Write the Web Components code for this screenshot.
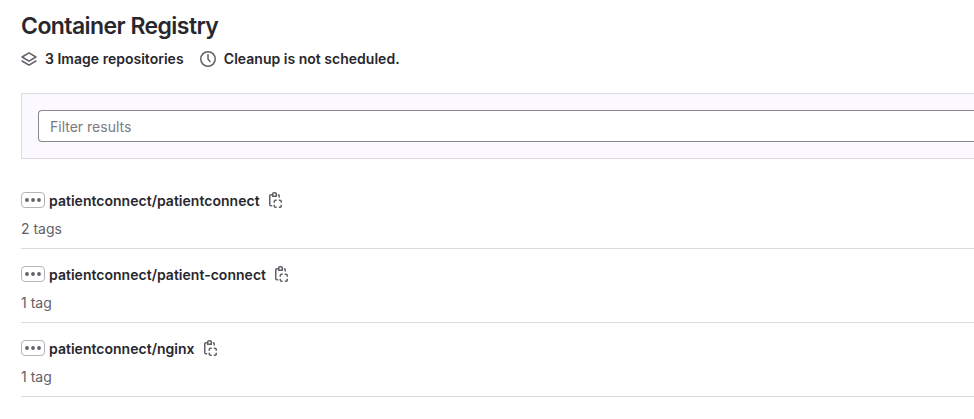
<!DOCTYPE html>
<html lang="en">
<head>
<meta charset="utf-8">
<title>Container Registry</title>
<style>
html,body{margin:0;background:#fff;overflow:hidden}
body{font:400 14px/20px Inter,"Liberation Sans",sans-serif;color:#28272d;height:419px}
</style>
</head>
<body>
<registry-page>
  <registry-header slot="header" heading="Container Registry">
    <meta-item icon="layers">3 Image repositories</meta-item>
    <meta-item icon="clock">Cleanup is not scheduled.</meta-item>
  </registry-header>
  <filter-bar slot="filter">Filter results</filter-bar>
  <repo-row><span>patientconnect/patientconnect</span><span slot="tags">2 tags</span></repo-row>
  <repo-row><span>patientconnect/patient-connect</span><span slot="tags">1 tag</span></repo-row>
  <repo-row><span>patientconnect/nginx</span><span slot="tags">1 tag</span></repo-row>
</registry-page>
<script>
const icons = {
  layers: '<path d="M8 1.9 14.9 6 8 10.1 1.1 6Z M1.1 10 8 14.1 14.9 10" fill="none" stroke="currentColor" stroke-width="1.5" stroke-linejoin="round" stroke-linecap="round"/>',
  clock: '<circle cx="8" cy="8" r="7.25" fill="none" stroke="currentColor" stroke-width="1.5"/><path d="M8 3.8V8l2 2.6" fill="none" stroke="currentColor" stroke-width="1.5" stroke-linecap="round" stroke-linejoin="round"/>',
  copy: '<path d="M5.2 2.75H4A1.25 1.25 0 0 0 2.75 4v8.5A1.25 1.25 0 0 0 4 13.75h1.2M10.8 2.75H11A1.25 1.25 0 0 1 12.25 4v1.5M5.75 1.9a1.15 1.15 0 0 1 1.15-1.15h1.2A1.15 1.15 0 0 1 9.25 1.9v2.35h-3.5Z" fill="none" stroke="currentColor" stroke-width="1.5"/><path d="M9.7 8.25H8.5a1.25 1.25 0 0 0-1.25 1.25v1.2M11.8 8.25H13a1.25 1.25 0 0 1 1.25 1.25v1.2M7.25 12.8v1.2a1.25 1.25 0 0 0 1.25 1.25h1.2M14.25 12.8v1.2a1.25 1.25 0 0 1-1.25 1.25h-1.2" fill="none" stroke="currentColor" stroke-width="1.5"/>',
  dots: '<circle cx="2" cy="2" r="1.9"/><circle cx="8" cy="2" r="1.9"/><circle cx="14" cy="2" r="1.9"/>'
};
function define(name, render) {
  customElements.define(name, class extends HTMLElement {
    constructor() { super(); this.attachShadow({mode: 'open'}); }
    connectedCallback() { this.shadowRoot.innerHTML = render(this); }
  });
}
define('ui-icon', el => `<style>:host{display:block;width:16px;height:16px;flex:none;color:#626168}svg{display:block}</style><svg width="16" height="16" viewBox="0 0 16 16">${icons[el.getAttribute('name')]}</svg>`);
define('meta-item', el => `<style>:host{display:flex;align-items:center;gap:8px;font-weight:600;letter-spacing:.015px;white-space:nowrap}</style><ui-icon name="${el.getAttribute('icon')}"></ui-icon><span><slot></slot></span>`);
define('registry-header', el => `<style>:host{display:block}h1{margin:0;font-size:23px;line-height:28px;font-weight:600;letter-spacing:-.57px;white-space:nowrap}div{display:flex;gap:16.2px;margin-top:9px}</style><h1>${el.getAttribute('heading')}</h1><div><slot></slot></div>`);
define('filter-bar', () => `<style>:host{display:block;box-sizing:border-box;height:66px;padding:16px 0 16px 16px;background:#fbf9ff;border:1px solid #dcdcde;border-right:0}div{box-sizing:border-box;height:32px;padding:6px 11px;line-height:20px;border:1px solid #89888d;border-right:0;border-radius:4px 0 0 4px;background:#fff;color:#7b7a80}</style><div><slot></slot></div>`);
define('more-button', () => `<style>:host{display:flex;align-items:center;justify-content:center;box-sizing:border-box;width:24px;height:16px;margin-bottom:2px;border:1px solid #b5b4b9;border-radius:4px;flex:none;color:#626168}svg{display:block}</style><svg width="16" height="4" viewBox="0 0 16 4" fill="currentColor">${icons.dots}</svg>`);
define('repo-row', () => `<style>:host{display:block;box-sizing:border-box;height:74px;padding-top:16px;border-bottom:1px solid #dcdcde}.name{display:flex;align-items:center;height:20px;font-weight:600;letter-spacing:.02px;white-space:nowrap}.title{margin:0 7.2px 0 4px}ui-icon{margin-bottom:2px}.tags{margin-top:8px;color:#626168}</style><div class="name"><more-button></more-button><span class="title"><slot></slot></span><ui-icon name="copy"></ui-icon></div><div class="tags"><slot name="tags"></slot></div>`);
define('registry-page', () => `<style>:host{display:block;padding:12px 0 0 21px}.filter{margin-top:24px}.list{margin-top:16px}</style><slot name="header"></slot><div class="filter"><slot name="filter"></slot></div><div class="list"><slot></slot></div>`);
</script>
</body>
</html>
